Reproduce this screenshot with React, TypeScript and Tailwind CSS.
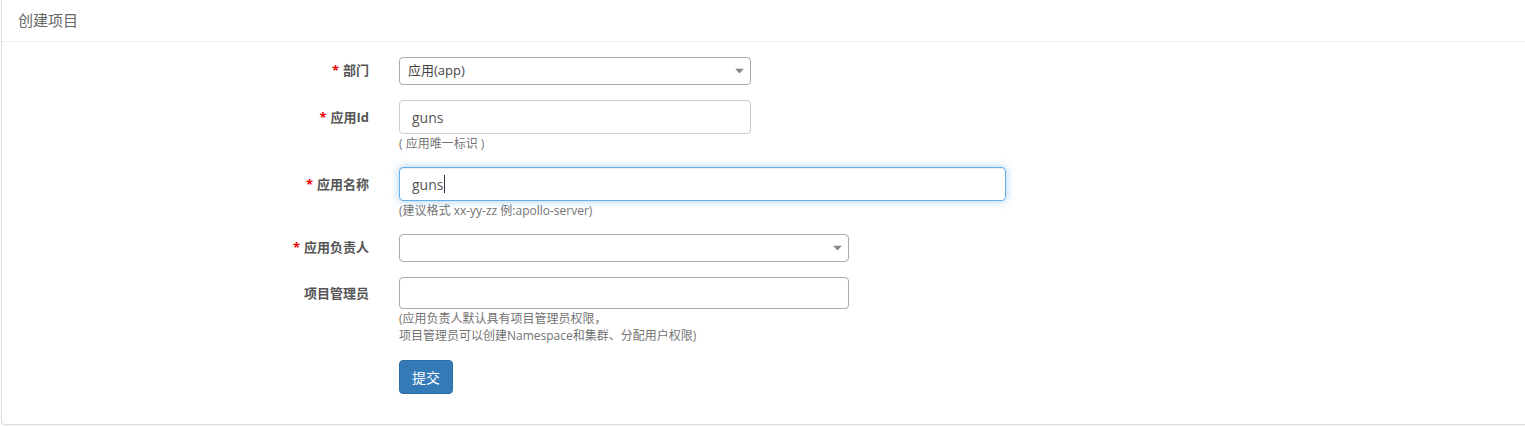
import React from "react";

const font = { fontFamily: '"Open Sans", "Noto Sans CJK SC", sans-serif' };

function Label({ text, required }: { text: string; required?: boolean }) {
  return (
    <div className="w-[367px] shrink-0 text-right text-[13px] font-bold text-[#555]">
      {required && <span className="mr-1 text-[#e00]">*</span>}
      {text}
    </div>
  );
}

function Arrow() {
  return (
    <svg className="absolute right-[6px] top-1/2 -translate-y-1/2" width="9" height="5" viewBox="0 0 9 5">
      <path d="M0 0h9L4.5 5z" fill="#888" />
    </svg>
  );
}

export default function App() {
  return (
    <div className="h-[426px] w-full overflow-hidden bg-white" style={font}>
      <div className="ml-px h-[425px] rounded-bl border-b border-l border-[#ddd] bg-white shadow-[0_1px_1px_rgba(0,0,0,0.05)]">
        <div className="h-[42px] border-b border-[#eee] pl-4 pt-[9px] text-[15px] text-[#666]">创建项目</div>
        <div className="pt-[15px]">
          {/* 部门 */}
          <div className="mb-[15px] flex items-center">
            <Label text="部门" required />
            <div className="relative ml-[30px] flex h-[28px] w-[352px] items-center rounded border border-[#aaa] pl-2 text-[13px] text-[#444]">
              应用(app)
              <Arrow />
            </div>
          </div>

          {/* 应用Id */}
          <div className="mb-[15px] flex">
            <div className="pt-[8px]">
              <Label text="应用Id" required />
            </div>
            <div className="ml-[30px]">
              <div className="flex h-[34px] w-[352px] items-center rounded border border-[#ccc] px-3 text-[14px] text-[#555]">guns</div>
              <div className="mt-[1px] text-[12px] leading-[17px] text-[#737373]">( 应用唯一标识 )</div>
            </div>
          </div>

          {/* 应用名称 */}
          <div className="mb-[15px] flex">
            <div className="pt-[8px]">
              <Label text="应用名称" required />
            </div>
            <div className="ml-[30px]">
              <div className="flex h-[34px] w-[607px] items-center rounded border border-[#66afe9] px-3 text-[14px] text-[#555] shadow-[inset_0_1px_1px_rgba(0,0,0,0.075),0_0_8px_rgba(102,175,233,0.6)]">
                guns<span className="ml-px inline-block h-[18px] w-px bg-[#333]" />
              </div>
              <div className="mt-[1px] text-[12px] leading-[17px] text-[#737373]">(建议格式 xx-yy-zz 例:apollo-server)</div>
            </div>
          </div>

          {/* 应用负责人 */}
          <div className="mb-[15px] flex items-center">
            <Label text="应用负责人" required />
            <div className="relative ml-[30px] h-[28px] w-[450px] rounded border border-[#aaa]">
              <Arrow />
            </div>
          </div>

          {/* 项目管理员 */}
          <div className="mb-[16px] flex">
            <div className="pt-[7px]">
              <Label text="项目管理员" />
            </div>
            <div className="ml-[30px]">
              <div className="h-[32px] w-[450px] rounded border border-[#aaa]" />
              <div className="mt-[1px] text-[12px] leading-[17px] text-[#737373]">
                (应用负责人默认具有项目管理员权限，
                <br />
                项目管理员可以创建Namespace和集群、分配用户权限)
              </div>
            </div>
          </div>

          <div className="flex">
            <div className="w-[367px] shrink-0" />
            <button className="ml-[30px] h-[34px] w-[54px] rounded border border-[#2e6da4] bg-[#337ab7] text-[14px] text-white">
              提交
            </button>
          </div>
        </div>
      </div>
    </div>
  );
}
